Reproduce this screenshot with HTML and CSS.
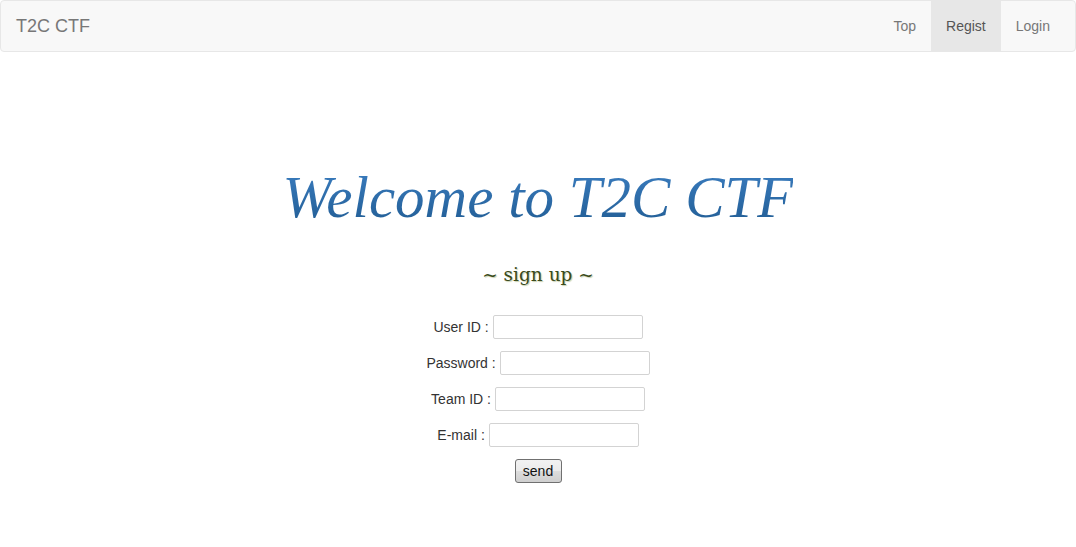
FILE: index.html
```html
<!DOCTYPE html>
<html>
<head>
<meta charset="utf-8">
<title>T2C CTF</title>
<link rel="stylesheet" href="styles.css">
</head>
<body>
<nav class="navbar">
  <a class="brand" href="#">T2C CTF</a>
  <ul class="nav">
    <li><a href="#">Top</a></li>
    <li class="active"><a href="#">Regist</a></li>
    <li><a href="#">Login</a></li>
  </ul>
</nav>
<main class="main">
  <h1 class="title">Welcome to T2C CTF</h1>
  <h2 class="subtitle">~ sign up ~</h2>
  <form class="form">
    <div class="row"><label>User ID : </label><input type="text"></div>
    <div class="row"><label>Password : </label><input type="password"></div>
    <div class="row"><label>Team ID : </label><input type="text"></div>
    <div class="row"><label>E-mail : </label><input type="text"></div>
    <div class="row"><button type="button" class="send">send</button></div>
  </form>
</main>
</body>
</html>
```
FILE: styles.css
```css
html, body {
  margin: 0;
  padding: 0;
  background: #fff;
  font-family: "Liberation Sans", Arial, sans-serif;
  font-size: 14px;
  color: #333;
}
.navbar {
  display: flex;
  justify-content: space-between;
  align-items: stretch;
  height: 50px;
  background: #f8f8f8;
  border: 1px solid #e7e7e7;
  border-radius: 4px;
}
.brand {
  display: block;
  padding: 15px 15px;
  font-size: 18px;
  line-height: 20px;
  color: #777;
  text-decoration: none;
}
.nav {
  display: flex;
  list-style: none;
  margin: 0;
  padding: 0;
  margin-right: 10px;
}
.nav li a {
  display: block;
  padding: 15px 15px;
  line-height: 20px;
  color: #777;
  text-decoration: none;
}
.nav li.active a {
  background: #e7e7e7;
  color: #555;
}
.main {
  text-align: center;
}
.title {
  margin: 110px 0 0;
  font-family: "Liberation Serif", "Times New Roman", serif;
  font-style: italic;
  font-weight: normal;
  font-size: 59px;
  line-height: 70px;
  background: linear-gradient(to bottom, #3d80c4 0%, #1f5a90 100%);
  -webkit-background-clip: text;
  background-clip: text;
  color: transparent;
  display: inline-block;
}
.subtitle {
  margin: 31px 0 0;
  font-family: "DejaVu Serif", Georgia, serif;
  font-weight: normal;
  font-size: 18.5px;
  line-height: 24px;
  color: #3b4a1a;
  text-shadow: 1px 1px 1px #c8d0b0;
}
.form {
  margin-top: 27px;
  display: flex;
  flex-direction: column;
  align-items: center;
  gap: 10px;
}
.row {
  display: flex;
  align-items: center;
  height: 26px;
}
.row label {
  white-space: pre;
}
.row input {
  width: 144px;
  height: 20px;
  padding: 1px 2px;
  border: 1px solid #d3d3d3;
  border-radius: 2px;
  margin: 0;
  font-size: 13px;
}
.send {
  font-family: "Liberation Sans", Arial, sans-serif;
  font-size: 14px;
  color: #111;
  width: 47px;
  height: 24px;
  padding: 0;
  border: 1px solid #707070;
  border-radius: 3px;
  background: linear-gradient(to bottom, #f2f2f2 0%, #ebebeb 50%, #dddddd 51%, #cfcfcf 100%);
}
```
